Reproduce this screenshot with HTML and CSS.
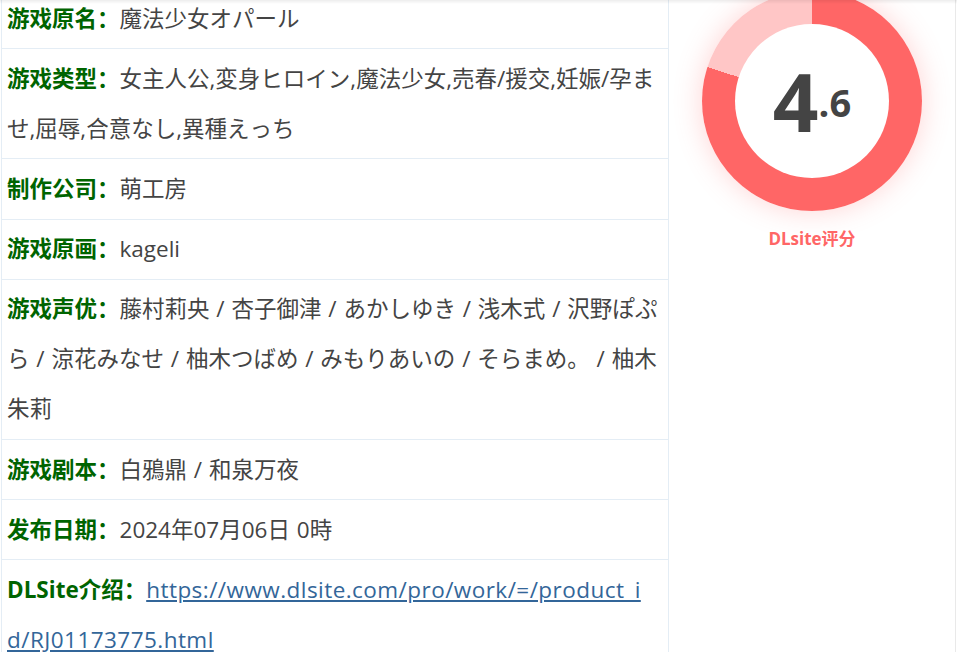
FILE: index.html
```html
<!DOCTYPE html>
<html lang="zh">
<head>
<meta charset="utf-8">
<link rel="stylesheet" href="styles.css">
</head>
<body>
<div class="topshade"></div>
<div class="page">
  <section class="info">
    <div class="row"><b class="k">游戏原名：</b><span class="v">魔法少女オパール</span></div>
    <div class="row"><b class="k">游戏类型：</b><span class="v">女主人公,変身ヒロイン,魔法少女,売春/援交,妊娠/孕ませ,屈辱,合意なし,異種えっち</span></div>
    <div class="row"><b class="k">制作公司：</b><span class="v">萌工房</span></div>
    <div class="row"><b class="k">游戏原画：</b><span class="v">kageli</span></div>
    <div class="row"><b class="k">游戏声优：</b><span class="v">藤村莉央 / 杏子御津 / あかしゆき / 浅木式 / 沢野ぽぷら / 涼花みなせ / 柚木つばめ / みもりあいの / そらまめ。 / 柚木朱莉</span></div>
    <div class="row"><b class="k">游戏剧本：</b><span class="v">白鴉鼎 / 和泉万夜</span></div>
    <div class="row"><b class="k">发布日期：</b><span class="v">2024年07月06日 0時</span></div>
    <div class="row"><b class="k">DLSite介绍：</b><a class="link" href="#">https://www.dlsite.com/pro/work/=/product_i<br>d/RJ01173775.html</a></div>
  </section>
  <aside class="side">
    <div class="ring">
      <div class="hole"><span class="score"><span class="big">4</span><span class="small">.6</span></span></div>
    </div>
    <div class="cap">DLsite评分</div>
  </aside>
</div>
</body>
</html>
```
FILE: styles.css
```css
html, body {
  margin: 0;
  padding: 0;
  background: #fff;
}
body {
  font-family: "Open Sans", "Noto Sans CJK SC", sans-serif;
  color: #444;
  overflow: hidden;
}
.topshade {
  position: fixed;
  left: 0;
  top: 0;
  right: 0;
  height: 4px;
  background: linear-gradient(rgba(0,0,0,0.07), rgba(0,0,0,0));
}
.page {
  display: flex;
  align-items: flex-start;
  margin-top: -11px;
}
.info {
  margin-left: 1px;
  width: 668px;
  box-sizing: border-box;
  border-left: 1px solid #e4edf5;
  border-right: 1px solid #e4edf5;
  flex: none;
}
.row {
  padding: 4.6px 7px 4.6px 5px;
  border-bottom: 1px solid #e4edf5;
  font-size: 22.5px;
  line-height: 50px;
}
.k {
  color: #006400;
  font-weight: bold;
}
.v {
  color: #444;
  word-spacing: 1px;
}
.link {
  color: #336699;
  text-decoration: underline;
  letter-spacing: 0.45px;
  word-break: break-all;
}
.side {
  width: 287px;
  box-sizing: border-box;
  border-right: 1px solid #e9e9e9;
  height: 680px;
  display: flex;
  flex-direction: column;
  align-items: center;
  flex: none;
}
.ring {
  margin-top: 2px;
  width: 220px;
  height: 220px;
  border-radius: 50%;
  background: conic-gradient(#ff6666 0deg 288deg, #ffc6c6 288deg 360deg);
  box-shadow: 0 0 28px rgba(255, 102, 102, 0.28);
  display: flex;
  align-items: center;
  justify-content: center;
}
.hole {
  width: 154px;
  height: 154px;
  border-radius: 50%;
  background: #fff;
  display: flex;
  align-items: center;
  justify-content: center;
}
.score {
  line-height: 1;
  color: #444;
  font-weight: bold;
  font-family: "Open Sans", sans-serif;
}
.big {
  font-size: 80px;
}
.small {
  font-size: 38px;
  vertical-align: 15px;
}
.cap {
  margin-top: 17px;
  font-size: 17px;
  line-height: 22px;
  font-weight: bold;
  color: #ff6666;
}
```
